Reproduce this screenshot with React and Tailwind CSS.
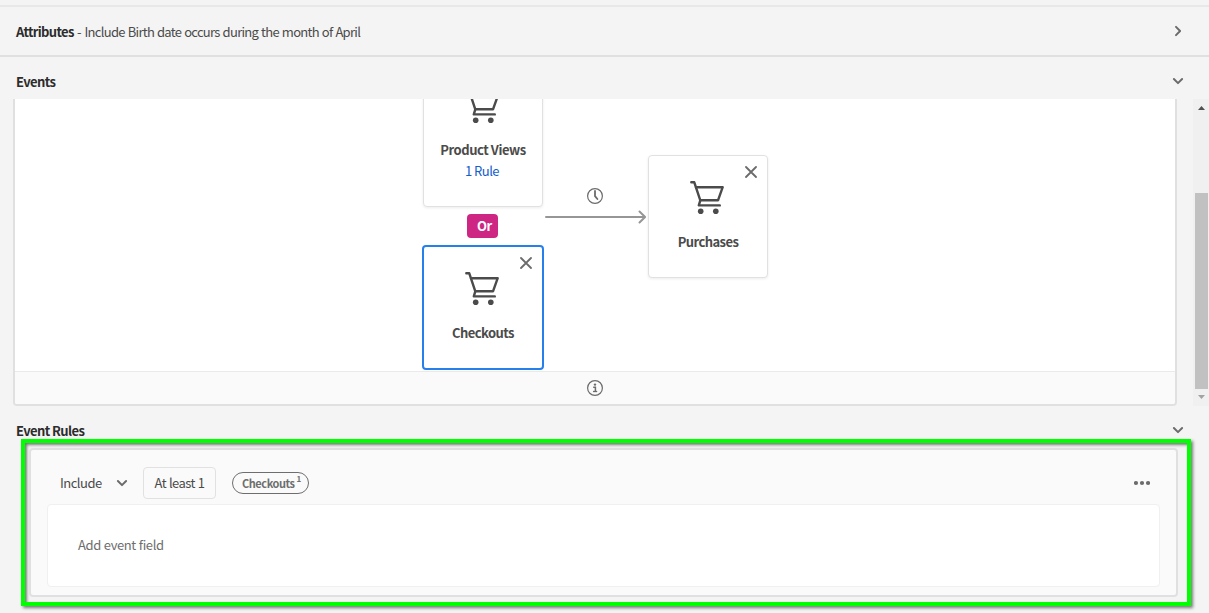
import React from "react";

const text = "font-['Noto_Sans_CJK_SC','Noto_Sans',sans-serif] text-[13px] leading-5 whitespace-nowrap";

function Chevron({ className = "" }) {
  return (
    <svg className={`shrink-0 ${className}`} width="12" height="12" viewBox="0 0 12 12" fill="none" stroke="#6b6b6b" strokeWidth="2" strokeLinecap="round" strokeLinejoin="round">
      <path d="M1.9 4 6 8.1 10.1 4" />
    </svg>
  );
}

function Cart() {
  return (
    <svg className="shrink-0" width="36" height="36" viewBox="0 0 36 36" fill="none" stroke="#4b4b4b" strokeWidth="2.4" strokeLinejoin="round" strokeLinecap="round">
      <path d="M1.3 2.3h3L10.3 20.3 8.8 25.4h21" />
      <path d="M6 7.2h26.7L28 20.3H10.3" />
      <circle cx="10.7" cy="31.2" r="2.8" fill="#4b4b4b" stroke="none" />
      <circle cx="25.8" cy="31.2" r="2.8" fill="#4b4b4b" stroke="none" />
    </svg>
  );
}

function Close() {
  return (
    <svg width="12" height="12" viewBox="0 0 12 12" stroke="#6b6b6b" strokeWidth="1.8" strokeLinecap="round">
      <path d="M1 1l10 10M11 1 1 11" />
    </svg>
  );
}

function EventCard({ label, selected, className }) {
  const frame = selected
    ? "border-2 border-[#2680eb] w-[122px] h-[125px]"
    : "border border-[#e1e1e1] shadow-[0_1px_3px_rgba(0,0,0,0.08)] w-[120px] h-[123px]";
  return (
    <div className={`absolute flex flex-col items-center rounded-[4px] bg-white pt-[24px] ${frame} ${className}`}>
      <div className="absolute top-[10px] right-[10px]"><Close /></div>
      <Cart />
      <div className={`${text} mt-[16px] font-bold tracking-[-0.56px] text-[#4b4b4b]`}>{label}</div>
    </div>
  );
}

export default function App() {
  return (
    <div className="flex h-[613px] w-[1209px] flex-col overflow-hidden bg-[#f4f4f4]">
      <div className="mt-[5px] flex h-[52px] shrink-0 items-center justify-between border-t-2 border-b-2 border-t-[#e8e8e8] border-b-[#e0e0e0] pl-4 pr-[25px]">
        <div className={`${text} mt-[2px] flex text-[#4b4b4b]`}>
          <span className="w-[61px] font-bold tracking-[-0.65px] text-[#2c2c2c]">Attributes</span>
          <span className="w-[7.5px]">-</span>
          <span className="tracking-[-0.7px] [word-spacing:0.65px]">Include Birth date occurs during the month of April</span>
        </div>
        <Chevron className="-rotate-90" />
      </div>

      <div className="flex h-[42px] shrink-0 items-center justify-between pl-4 pr-[25px] pt-[7px]">
        <span className={`${text} font-bold tracking-[-0.6px] text-[#2c2c2c]`}>Events</span>
        <Chevron className="mb-[2px]" />
      </div>

      <div className="flex h-[307px] shrink-0 justify-between pl-[13px]">
        <div className="flex w-[1164px] flex-col overflow-hidden rounded-b-[4px] border-2 border-t-0 border-[#e0e0e0] bg-white">
          <div className="relative h-[272px] shrink-0 overflow-hidden">
            <div className="absolute left-[408px] top-[-16px] flex h-[124px] w-[120px] flex-col items-center rounded-[4px] border border-[#e1e1e1] bg-white pt-[5px] shadow-[0_1px_3px_rgba(0,0,0,0.08)]">
              <Cart />
              <div className={`${text} mt-[15px] font-bold tracking-[-0.45px] text-[#4b4b4b]`}>Product Views</div>
              <div className={`${text} mt-[1px] pr-[2px] tracking-[-0.5px] text-[#1260cc]`}>1 Rule</div>
            </div>
            <div className={`${text} absolute left-[452px] top-[115px] h-6 w-[31px] rounded-[4px] bg-[#ce2783] pl-[10px] !leading-6 font-bold tracking-[-0.4px] text-white`}>Or</div>
            <EventCard label="Checkouts" selected className="left-[407px] top-[146px]" />
            <svg className="absolute left-[530px] top-[86px]" width="104" height="40" viewBox="0 0 104 40" fill="none" stroke="#969696" strokeWidth="2" strokeLinecap="round" strokeLinejoin="round">
              <path d="M1 32h99M94.5 26.5l5.6 5.5-5.6 5.5" />
              <circle cx="50" cy="11" r="7.4" stroke="#6b6b6b" strokeWidth="1.2" />
              <path d="M50 6v5.2l2.4 2.8" stroke="#6b6b6b" strokeWidth="1.8" />
            </svg>
            <EventCard label="Purchases" className="left-[633px] top-[56px]" />
          </div>
          <div className="flex flex-1 items-center justify-center border-t border-[#eaeaea] bg-[#fafafa]">
            <svg width="16" height="16" viewBox="0 0 16 16" fill="none" stroke="#6b6b6b">
              <circle cx="8" cy="8" r="7.4" strokeWidth="1.2" />
              <path d="M6.2 7.2h2.2v4.2" strokeWidth="1.5" />
              <path d="M6 11.5h4.2" strokeWidth="1.3" />
              <circle cx="8" cy="4.6" r="1.2" fill="#6b6b6b" stroke="none" />
            </svg>
          </div>
        </div>
        <div className="flex w-4 flex-col items-center bg-[#f0f0f0]">
          <svg className="shrink-0" width="16" height="94" viewBox="0 0 16 94"><path d="M5 11l3.5-4L12 11z" fill="#505050" /></svg>
          <div className="ml-px h-[196px] w-[13px] shrink-0 bg-[#c1c1c1]" />
          <svg className="shrink-0" width="16" height="17" viewBox="0 0 16 17"><path d="M5 6l3.5 4L12 6z" fill="#a3a3a3" /></svg>
        </div>
      </div>

      <div className="flex h-[33px] shrink-0 items-center justify-between pl-4 pr-[25px] pt-[16px]">
        <span className={`${text} font-bold tracking-[-0.58px] text-[#2c2c2c]`}>Event Rules</span>
        <Chevron className="mb-[2px]" />
      </div>

      <div className="ml-[21px] flex h-[167px] w-[1170px] shrink-0 flex-col border-4 border-[#00ff00] pl-[4px] pr-[9px] pt-[5px] shadow-[2px_2px_3px_rgba(0,0,0,0.5),inset_2px_2px_3px_rgba(0,0,0,0.5)]">
        <div className="flex h-[149px] shrink-0 flex-col rounded-[4px] border-2 border-[#e0e0e0] bg-[#fafafa] px-[16px] pt-[17px]">
          <div className="flex h-8 items-center pl-[13px] pr-[10px]">
            <span className={`${text} w-[56px] tracking-[-0.5px] text-[#4b4b4b]`}>Include</span>
            <Chevron />
            <div className={`${text} ml-[15px] flex h-8 w-[73px] items-center justify-center rounded-[4px] border border-[#e1e1e1] tracking-[-0.55px] text-[#4b4b4b] [word-spacing:0.6px]`}>At least 1</div>
            <div className={`${text} ml-4 flex h-[22px] w-[77px] items-center rounded-full border border-[#6e6e6e] pl-[9px] !text-[11px] font-bold tracking-[-0.45px] text-[#6e6e6e]`}>
              Checkouts<span className="mb-[9px] ml-[2px] text-[8px]">1</span>
            </div>
            <svg className="ml-auto" width="16" height="6" viewBox="0 0 16 6" fill="#6b6b6b">
              <circle cx="2" cy="3" r="2.1" /><circle cx="8" cy="3" r="2.1" /><circle cx="14" cy="3" r="2.1" />
            </svg>
          </div>
          <div className="mt-[5px] flex h-[83px] items-center rounded-[4px] border border-[#f0f0f0] bg-white pl-[30px] pb-[2px]">
            <span className={`${text} tracking-[-0.4px] text-[#6e6e6e] [word-spacing:0.5px]`}>Add event field</span>
          </div>
        </div>
      </div>
    </div>
  );
}
